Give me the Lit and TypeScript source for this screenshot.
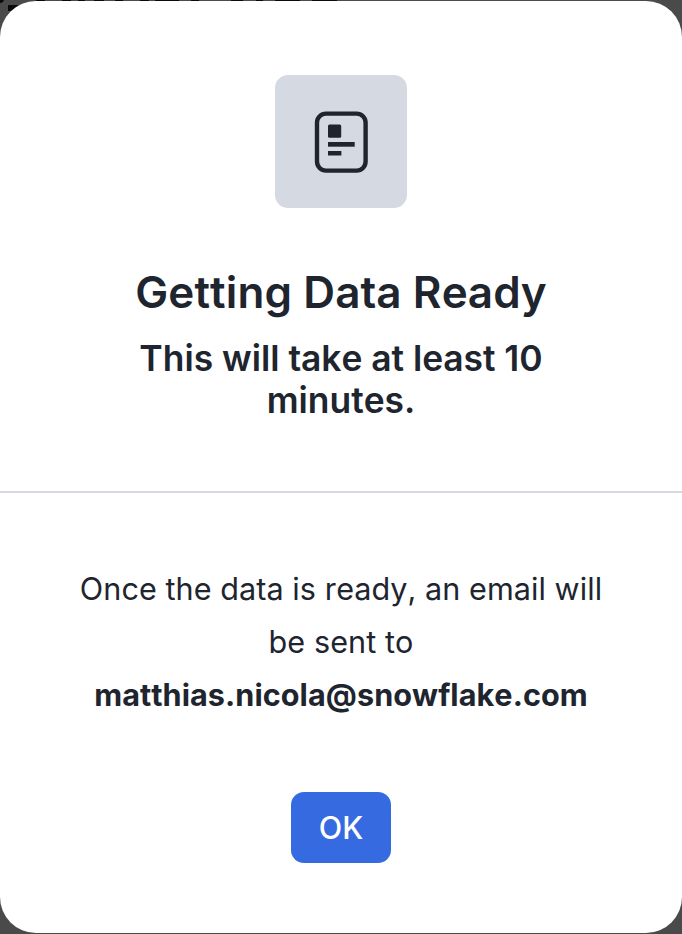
import { LitElement, html, css } from "lit";
import { customElement } from "lit/decorators.js";

@customElement("app-root")
export class AppRoot extends LitElement {
  static styles = css`
    :host { display: flow-root; width: 682px; height: 934px; overflow: hidden; background: #4a4a4b; position: relative; font-family: Inter, sans-serif; font-kerning: none; color: #1e252f; }
    .behind { position: absolute; left: 0; top: 0; width: 340px; height: 12px; }
    .dialog { position: relative; box-sizing: border-box; height: 932px; margin-top: 1px; display: flex; flex-direction: column; background: #fff; border-radius: 36px; overflow: hidden; }
    .head { box-sizing: border-box; height: 492px; padding-top: 74px; border-bottom: 2px solid #d5d9e2; display: flex; flex-direction: column; align-items: center; text-align: center; }
    .tile { width: 132px; height: 133px; border-radius: 13px; background: #d5d9e2; display: flex; }
    .tile svg { width: 132px; height: 133px; }
    h1 { margin: 55px 0 0; font-size: 44px; line-height: 58px; font-weight: 600; letter-spacing: 0.12px; white-space: nowrap; }
    h2 { margin: 17px 0 0; font-size: 35.4px; line-height: 42px; font-weight: 600; white-space: nowrap; }
    .body { flex: 1; display: flex; flex-direction: column; align-items: center; text-align: center; padding-top: 69px; }
    p { margin: 0; font-size: 30.6px; line-height: 53px; letter-spacing: 0.06px; white-space: nowrap; }
    b { font-weight: 700; }
    button { margin-top: 71px; width: 100px; height: 71px; border: 0; border-radius: 13px; background: #356ae0; color: #fff; font: 450 30.6px/71px Inter, sans-serif; font-kerning: none; padding: 0; }
  `;

  render() {
    return html`
      <svg class="behind" viewBox="0 0 340 12" fill="#0b080e">
        <path d="M0 0h4q-1 3-4 3zM8 5h10v6H8zM36 0h9v1h-9zM62 0h9v1h-9zM78 0h7v1h-7zM94 0h10v1H94zM115 0h8v1h-8zM140 0h9v1h-9zM155 0h24v1h-24zM191 0h8v1h-8zM231 0h12v1h-12zM256 0h7v1h-7zM275 0h25v1h-25zM312 0h25v1h-25z"/>
      </svg>
      <div class="dialog">
        <div class="head">
          <div class="tile">
            <svg viewBox="0 0 132 133" fill="#1e252f">
              <rect x="42" y="38.6" width="48.6" height="57" rx="9" fill="none" stroke="#1e252f" stroke-width="4.4"/>
              <rect x="53" y="49.5" width="13.2" height="13.3" rx="1.5"/>
              <rect x="53" y="67" width="26.7" height="4.7"/>
              <rect x="53" y="76" width="13.4" height="4.5"/>
            </svg>
          </div>
          <h1>Getting Data Ready</h1>
          <h2>This will take at least 10<br>minutes.</h2>
        </div>
        <div class="body">
          <p>Once the data is ready, an email will<br>be sent to<br><b>matthias.nicola@snowflake.com</b></p>
          <button>OK</button>
        </div>
      </div>`;
  }
}
